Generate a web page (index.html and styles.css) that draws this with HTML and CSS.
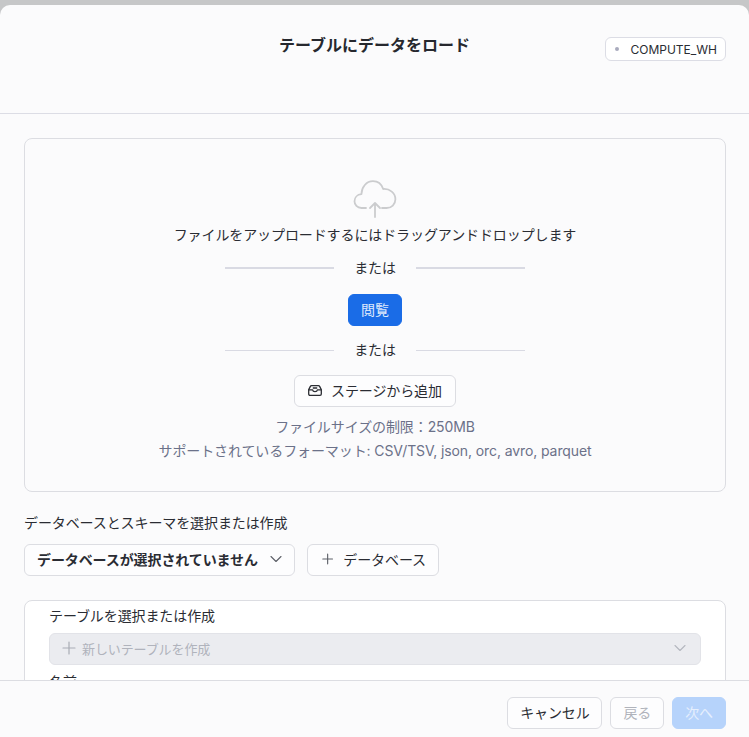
FILE: index.html
```html
<!DOCTYPE html>
<html lang="ja">
<head>
    <meta charset="UTF-8">
    <meta name="viewport" content="width=device-width, initial-scale=1.0">
    <title>テーブルにデータをロード</title>
    <link rel="stylesheet" href="styles.css">
</head>
<body>
    <div class="dialog">
        <div class="dialog-header">
            <h1>テーブルにデータをロード</h1>
            <div class="warehouse"><span class="warehouse-dot"></span>COMPUTE_WH</div>
        </div>
        <div class="dialog-body">
            <div class="dropzone">
                <svg class="cloud-icon" width="44" height="38" viewBox="0 0 44 38" fill="none" stroke="#cbccce" stroke-width="1.8" stroke-linecap="round" stroke-linejoin="round">
                    <path d="M13 28H8.5C4.2 28 1.5 24.8 1.5 21.3C1.5 17.6 4.2 14.6 8.4 14.2C8.6 7 13.4 1.2 20 1.2C25 1.2 28.6 4.4 30.2 9C36.8 8.6 42.4 13 42.4 19.2C42.4 24.4 38.4 28 33.6 28H29"/>
                    <path d="M22 37V23M17 28L22 23L27 28"/>
                </svg>
                <p class="drop-text">ファイルをアップロードするにはドラッグアンドドロップします</p>
                <div class="divider divider-thick"><span>または</span></div>
                <button class="btn btn-primary">閲覧</button>
                <div class="divider"><span>または</span></div>
                <button class="btn btn-stage">
                    <svg width="14" height="11" viewBox="0 0 14 11" fill="none" stroke="#2b2d33" stroke-width="1.3" stroke-linejoin="round">
                        <path d="M0.7 4.6L2.4 1.4C2.6 0.9 3 0.7 3.5 0.7H10.5C11 0.7 11.4 0.9 11.6 1.4L13.3 4.6V9C13.3 9.8 12.8 10.3 12 10.3H2C1.2 10.3 0.7 9.8 0.7 9V4.6Z"/>
                        <path d="M0.7 4.8H4.6C4.8 6 5.7 6.6 7 6.6C8.3 6.6 9.2 6 9.4 4.8H13.3M4.8 3H9.2"/>
                    </svg>
                    ステージから追加
                </button>
                <p class="hint hint-first">ファイルサイズの制限：250MB</p>
                <p class="hint">サポートされているフォーマット: CSV/TSV, json, orc, avro, parquet</p>
            </div>

            <div class="field-label">データベースとスキーマを選択または作成</div>
            <div class="db-row">
                <button class="btn btn-select">
                    データベースが選択されていません
                    <svg width="12" height="8" viewBox="0 0 12 8" fill="none" stroke="#5d6068" stroke-width="1.1" stroke-linecap="round" stroke-linejoin="round"><path d="M1 1.5L6 6.5L11 1.5"/></svg>
                </button>
                <button class="btn btn-add">
                    <svg width="14" height="14" viewBox="0 0 14 14" fill="none" stroke="#5d6068" stroke-width="1.4" stroke-linecap="round"><path d="M7 1V13M1 7H13"/></svg>
                    データベース
                </button>
            </div>

            <div class="table-card">
                <div class="table-label">テーブルを選択または作成</div>
                <div class="table-select">
                    <span class="table-select-text">
                        <svg width="14" height="14" viewBox="0 0 14 14" fill="none" stroke="#a9acb5" stroke-width="1.2" stroke-linecap="round"><path d="M7 1V13M1 7H13"/></svg>
                        新しいテーブルを作成
                    </span>
                    <svg width="12" height="8" viewBox="0 0 12 8" fill="none" stroke="#b4b7bf" stroke-width="1.1" stroke-linecap="round" stroke-linejoin="round"><path d="M1 1.5L6 6.5L11 1.5"/></svg>
                </div>
                <div class="table-label table-name">名前</div>
            </div>
        </div>
        <div class="dialog-footer">
            <button class="btn btn-footer btn-cancel">キャンセル</button>
            <button class="btn btn-footer btn-disabled">戻る</button>
            <button class="btn btn-footer btn-next">次へ</button>
        </div>
    </div>
</body>
</html>
```

FILE: styles.css
```css
html, body {
    height: 100%;
}
body {
    font-family: Inter, "Noto Sans CJK JP", sans-serif;
    font-size: 14px;
    letter-spacing: -0.1px;
    color: #2a2c33;
    background-color: #c6c7c8;
    margin: 0;
    padding: 5px 0 0;
    box-sizing: border-box;
    overflow: hidden;
}
p {
    margin: 0;
}
.dialog {
    height: 732px;
    display: flex;
    flex-direction: column;
    background-color: #fbfbfc;
    border-radius: 10px 10px 0 0;
    overflow: hidden;
}
.dialog-header {
    height: 109px;
    flex-shrink: 0;
    box-sizing: border-box;
    border-bottom: 1px solid #dcdde5;
    display: flex;
    justify-content: flex-end;
    align-items: flex-start;
    padding: 32px 23px 0;
    position: relative;
}
.dialog-header h1 {
    position: absolute;
    left: 0;
    right: 0;
    top: 28px;
    margin: 0;
    text-align: center;
    font-size: 16px;
    line-height: 24px;
    font-weight: 700;
    letter-spacing: 0;
    color: #26282e;
}
.warehouse {
    height: 24px;
    box-sizing: border-box;
    display: flex;
    align-items: center;
    gap: 11px;
    padding: 0 8px 0 9px;
    font-size: 12px;
    letter-spacing: 0;
    background-color: #fff;
    border: 1px solid #dcdde5;
    border-radius: 6px;
}
.warehouse-dot {
    width: 4px;
    height: 4px;
    border-radius: 50%;
    background-color: #a9abbd;
}
.dialog-body {
    flex: 1;
    min-height: 0;
    overflow: hidden;
    padding: 24px 23px 0 24px;
}
.dropzone {
    height: 354px;
    box-sizing: border-box;
    border: 1px solid #dcdde2;
    border-radius: 8px;
    display: flex;
    flex-direction: column;
    align-items: center;
    padding-top: 41px;
}
.cloud-icon {
    display: block;
}
.drop-text {
    margin-top: 7px;
    line-height: 20px;
}
.divider {
    width: 300px;
    display: flex;
    align-items: center;
    gap: 20px;
    line-height: 20px;
}
.divider::before, .divider::after {
    content: "";
    flex: 1;
    height: 1px;
    background-color: #d9dae3;
}
.divider-thick {
    margin: 13px 0 16px;
}
.divider-thick::before, .divider-thick::after {
    height: 2px;
}
.btn {
    font-family: inherit;
    font-size: 14px;
    letter-spacing: inherit;
    white-space: nowrap;
    height: 32px;
    box-sizing: border-box;
    border: 1px solid #dcdde2;
    border-radius: 6px;
    background-color: #fdfdfe;
    color: #2a2c33;
    display: flex;
    align-items: center;
    padding: 0 12px 2px;
}
.btn-primary {
    background-color: #1a6ce7;
    border-color: #1a6ce7;
    color: #dde9fc;
    width: 54px;
    justify-content: center;
    margin-bottom: 14px;
}
.btn-stage {
    margin-top: 15px;
    gap: 9px;
    padding: 0 12px 2px 13px;
    width: 162px;
}
.hint {
    color: #6b7189;
    line-height: 24px;
}
.hint-first {
    margin-top: 8px;
}
.field-label {
    margin-top: 21px;
    line-height: 20px;
}
.db-row {
    display: flex;
    gap: 12px;
    margin-top: 11px;
}
.btn-select {
    width: 271px;
    justify-content: space-between;
    font-weight: 700;
}
.btn-add {
    gap: 10px;
    padding: 0 12px 2px 14px;
    width: 132px;
}
.table-card {
    margin-top: 24px;
    height: 120px;
    box-sizing: border-box;
    background-color: #fff;
    border: 1px solid #dcdde2;
    border-radius: 8px;
    padding: 5px 24px 0;
}
.table-label {
    line-height: 20px;
}
.table-select {
    height: 32px;
    margin-top: 7px;
    box-sizing: border-box;
    background-color: #ebecf0;
    border: 1px solid #e2e3e8;
    border-radius: 6px;
    color: #b0b3bc;
    font-size: 13px;
    display: flex;
    align-items: center;
    justify-content: space-between;
    padding: 0 14px 2px 12px;
}
.table-select-text {
    display: flex;
    align-items: center;
    gap: 6px;
}
.table-name {
    margin-top: 7px;
}
.dialog-footer {
    height: 57px;
    flex-shrink: 0;
    box-sizing: border-box;
    border-top: 1px solid #dcdde2;
    background-color: #fbfbfc;
    display: flex;
    justify-content: flex-end;
    gap: 8px;
    padding: 16px 23px 0 0;
}
.btn-cancel {
    width: 95px;
    justify-content: center;
}
.btn-disabled {
    color: #b0b3bb;
}
.btn-next {
    background-color: #b6d3fb;
    border-color: #b6d3fb;
    color: #e6effd;
}
```
